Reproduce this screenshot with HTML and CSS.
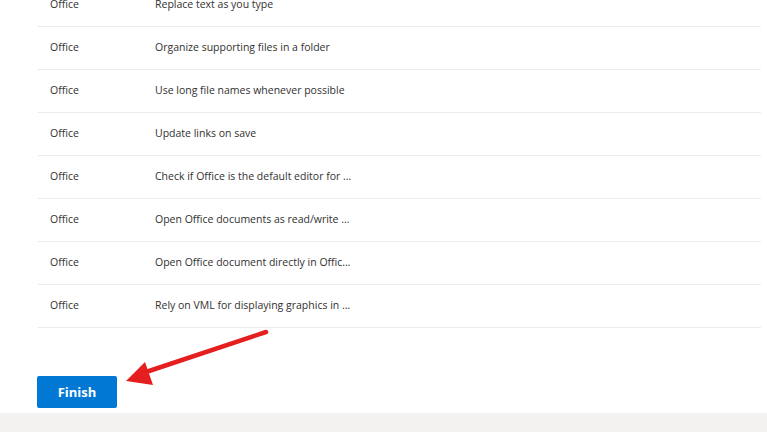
FILE: index.html
```html
<!DOCTYPE html>
<html lang="en">
<head>
    <meta charset="UTF-8">
    <meta name="viewport" content="width=device-width, initial-scale=1.0">
    <title>Office settings</title>
    <link rel="stylesheet" href="styles.css">
</head>
<body>
    <div class="panel">
        <div class="settings-list">
            <div class="row"><div class="cell app">Office</div><div class="cell name">Replace text as you type</div></div>
            <div class="row"><div class="cell app">Office</div><div class="cell name">Organize supporting files in a folder</div></div>
            <div class="row"><div class="cell app">Office</div><div class="cell name">Use long file names whenever possible</div></div>
            <div class="row"><div class="cell app">Office</div><div class="cell name">Update links on save</div></div>
            <div class="row"><div class="cell app">Office</div><div class="cell name">Check if Office is the default editor for Web pages created in Office</div></div>
            <div class="row"><div class="cell app">Office</div><div class="cell name">Open Office documents as read/write while browsing</div></div>
            <div class="row"><div class="cell app">Office</div><div class="cell name">Open Office document directly in Office applications</div></div>
            <div class="row"><div class="cell app">Office</div><div class="cell name">Rely on VML for displaying graphics in browsers</div></div>
        </div>
        <div class="actions">
            <button class="primary-btn">Finish</button>
        </div>
    </div>
    <div class="footer"></div>

    <!-- annotation arrow pointing at the button -->
    <svg class="arrow" width="767" height="432" viewBox="0 0 767 432">
        <line x1="266" y1="332" x2="146" y2="372" stroke="#e51f1f" stroke-width="4.5" stroke-linecap="round"/>
        <polygon points="126,381 145,362 153,385" fill="#e51f1f"/>
    </svg>
</body>
</html>
```

FILE: styles.css
```css
body {
    margin: 0;
    padding: 0;
    background-color: #fff;
    font-family: "Open Sans", "Noto Sans", sans-serif;
    color: #323130;
    overflow: hidden;
    height: 432px;
    position: relative;
}
.panel {
    padding: 0 6px 0 38px;
    height: 413px;
    overflow: hidden;
}
.settings-list {
    margin-top: -16px;
}
.row {
    display: flex;
    align-items: center;
    height: 43px;
    padding-bottom: 3px;
    box-sizing: border-box;
    border-bottom: 1px solid #edebe9;
    font-size: 10.5px;
}
.cell.app {
    width: 117px;
    flex-shrink: 0;
    padding-left: 12px;
    box-sizing: border-box;
}
.cell.name {
    width: 197px;
    white-space: nowrap;
    overflow: hidden;
    text-overflow: ellipsis;
}
.actions {
    padding-top: 48px;
}
.primary-btn {
    width: 80px;
    height: 32px;
    margin-left: -1px;
    background-color: #0078d4;
    color: #fff;
    border: none;
    border-radius: 2px;
    font-family: "Open Sans", "Noto Sans", sans-serif;
    font-size: 13px;
    font-weight: 700;
    cursor: pointer;
}
.footer {
    height: 19px;
    background-color: #f3f2f1;
}
.arrow {
    position: absolute;
    top: 0;
    left: 0;
    pointer-events: none;
}
```
